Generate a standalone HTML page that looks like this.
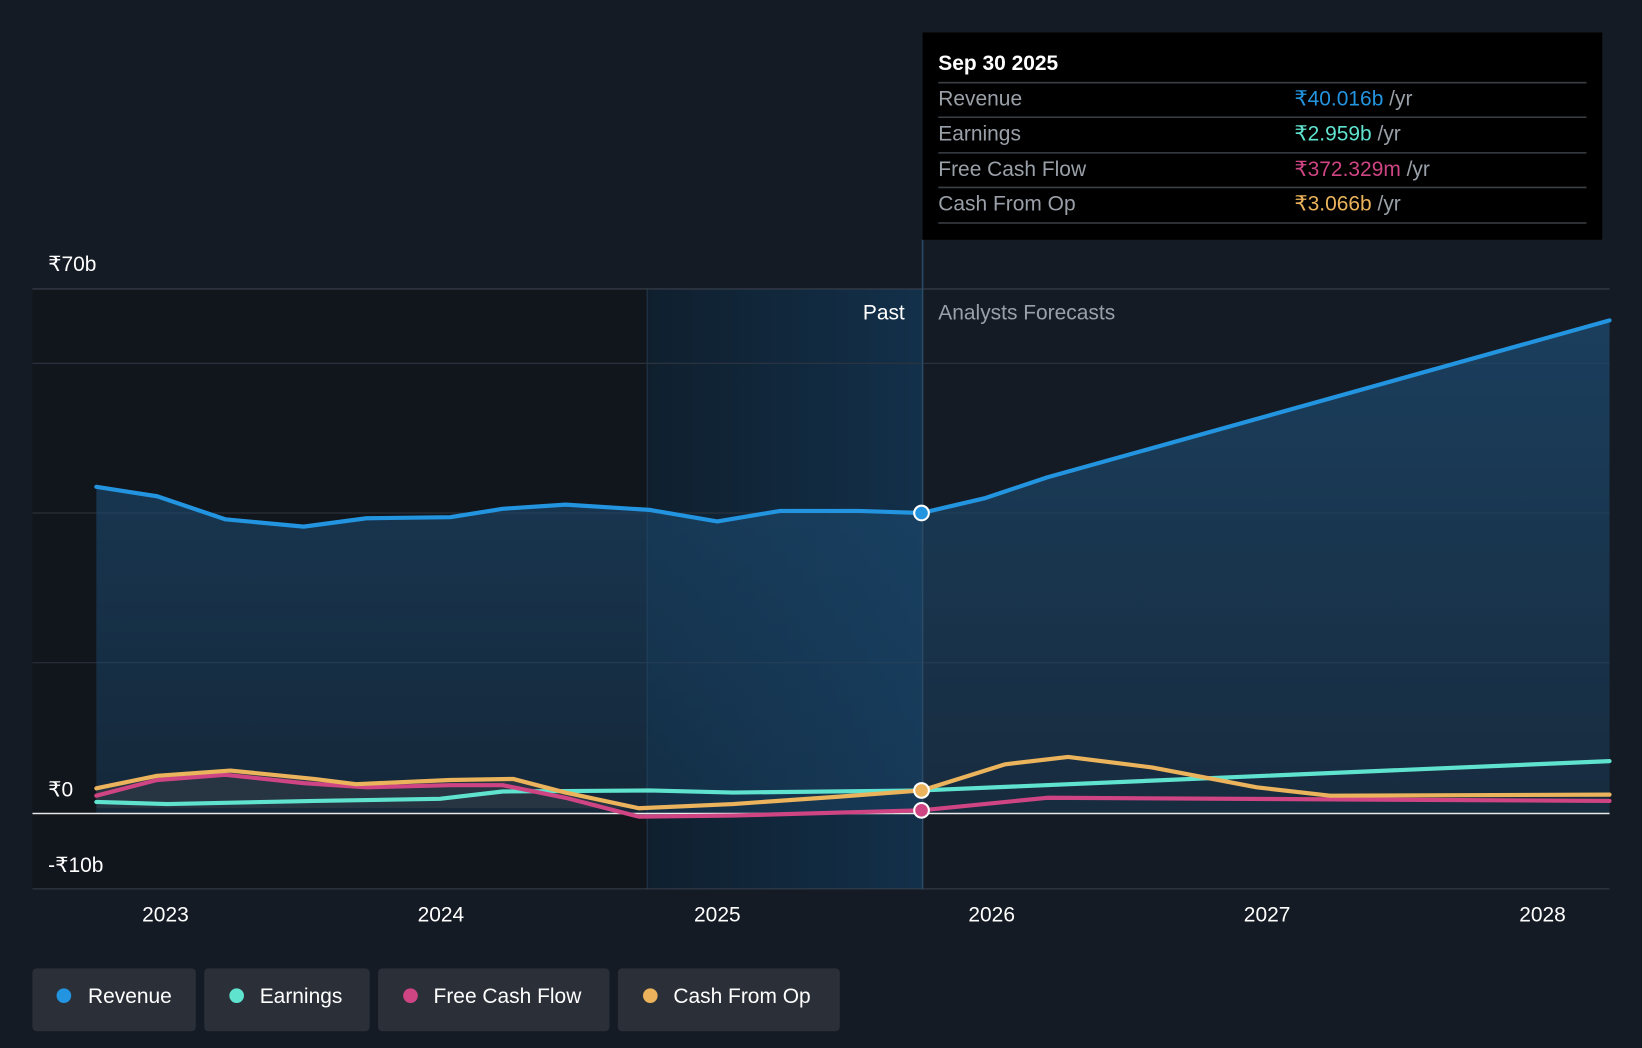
<!DOCTYPE html>
<html><head><meta charset="utf-8"><style>
html,body{margin:0;padding:0;background:#151b24;width:1642px;height:1048px;overflow:hidden}
svg{display:block}
text{font-family:"Liberation Sans",sans-serif}
</style></head><body>
<svg width="1642" height="1048" viewBox="0 0 1568 1001" preserveAspectRatio="none">
<defs>
<linearGradient id="hl" x1="0" x2="1" y1="0" y2="0">
<stop offset="0" stop-color="#0f1f2e"/><stop offset="1" stop-color="#13304a"/></linearGradient>
<linearGradient id="rf" x1="0" x2="0" y1="0" y2="1">
<stop offset="0" stop-color="#1c4a70" stop-opacity="0.75"/><stop offset="1" stop-color="#1c4a70" stop-opacity="0.35"/></linearGradient>
</defs>
<rect width="1568" height="1001" fill="#151b24"/>
<rect x="31" y="276" width="587" height="573" fill="#11151c"/>
<rect x="618" y="276" width="263" height="573" fill="url(#hl)"/>
<line x1="618" y1="276" x2="618" y2="849" stroke="#23384a" stroke-width="1"/>
<g stroke="#2e3540" stroke-width="1">
<line x1="31" y1="276" x2="1537" y2="276" stroke="#3a414c"/>
<line x1="31" y1="347" x2="1537" y2="347"/>
<line x1="31" y1="490" x2="1537" y2="490"/>
<line x1="31" y1="633" x2="1537" y2="633"/>
<line x1="31" y1="849" x2="1537" y2="849" stroke="#3a414c"/>
</g>
<polygon fill="url(#rf)" points="92,465 150,474 215,496 290,503 350,495 430,494 480,486 540,482 620,487 685,498 745,488 820,488 880,490 940,476 1000,456 1537,306 1537,777 92,777"/>
<polygon fill="#3a4048" opacity="0.5" points="92,753 150,741 220,736 300,744 340,749 430,745 490,744 540,757 610,772 92,772"/>
<line x1="31" y1="777" x2="1537" y2="777" stroke="#e8e8e8" stroke-width="1.5"/>
<line x1="881" y1="229" x2="881" y2="849" stroke="#2a4a66" stroke-width="1.5"/>
<g fill="none" stroke-width="4" stroke-linejoin="round" stroke-linecap="round">
<polyline stroke="#2394df" points="92,465 150,474 215,496 290,503 350,495 430,494 480,486 540,482 620,487 685,498 745,488 820,488 880,490 940,476 1000,456 1537,306"/>
<polyline stroke="#5fe3cf" points="92,766 160,768 300,765 420,763 480,756 620,755 700,757 880,755 1537,727"/>
<polyline stroke="#cf4584" points="92,760 150,745 215,740 290,748 350,752 430,750 480,750 540,762 610,780 700,779 880,774 1000,762 1537,765"/>
<polyline stroke="#eab35c" points="92,753 150,741 220,736 300,744 340,749 430,745 490,744 540,757 610,772 700,768 800,761 880,755 960,730 1020,723 1100,733 1200,752 1270,760 1537,759"/>
</g>
<circle cx="880" cy="490" r="7" fill="#2394df" stroke="#fff" stroke-width="2"/>
<circle cx="880" cy="755" r="7" fill="#eab35c" stroke="#fff" stroke-width="2"/>
<circle cx="880" cy="774" r="7" fill="#cf4584" stroke="#fff" stroke-width="2"/>
<g font-size="20" fill="#ffffff">
<text x="46" y="259">₹70b</text>
<text x="46" y="761">₹0</text>
<text x="46" y="833">-₹10b</text>
<text x="864" y="305" text-anchor="end">Past</text>
<text x="896" y="305" fill="#9aa0a8">Analysts Forecasts</text>
</g>
<g font-size="20" fill="#ffffff" text-anchor="middle">
<text x="158" y="880">2023</text><text x="421" y="880">2024</text><text x="685" y="880">2025</text>
<text x="947" y="880">2026</text><text x="1210" y="880">2027</text><text x="1473" y="880">2028</text>
</g>
<rect x="881" y="31" width="649" height="198" fill="#000"/>
<g font-size="20">
<text x="896" y="67" fill="#fff" font-weight="bold">Sep 30 2025</text>
<g stroke="#3a3f46" stroke-width="1.5"><line x1="896" y1="79" x2="1515" y2="79"/><line x1="896" y1="112" x2="1515" y2="112"/><line x1="896" y1="146" x2="1515" y2="146"/><line x1="896" y1="179" x2="1515" y2="179"/><line x1="896" y1="213" x2="1515" y2="213"/></g>
<text x="896" y="101" fill="#9aa0a8">Revenue</text>
<text x="896" y="134" fill="#9aa0a8">Earnings</text>
<text x="896" y="168" fill="#9aa0a8">Free Cash Flow</text>
<text x="896" y="201" fill="#9aa0a8">Cash From Op</text>
<text x="1236" y="101"><tspan fill="#2394df">₹40.016b</tspan><tspan fill="#9aa0a8"> /yr</tspan></text>
<text x="1236" y="134"><tspan fill="#5fe3cf">₹2.959b</tspan><tspan fill="#9aa0a8"> /yr</tspan></text>
<text x="1236" y="168"><tspan fill="#cf4584">₹372.329m</tspan><tspan fill="#9aa0a8"> /yr</tspan></text>
<text x="1236" y="201"><tspan fill="#eab35c">₹3.066b</tspan><tspan fill="#9aa0a8"> /yr</tspan></text>
</g>
<g font-size="20" fill="#fff">
<rect x="31" y="925" width="156" height="60" rx="4" fill="#2a2f38"/>
<circle cx="61" cy="951" r="7" fill="#2394df"/><text x="84" y="958">Revenue</text>
<rect x="195" y="925" width="158" height="60" rx="4" fill="#2a2f38"/>
<circle cx="226" cy="951" r="7" fill="#5fe3cf"/><text x="248" y="958">Earnings</text>
<rect x="361" y="925" width="221" height="60" rx="4" fill="#2a2f38"/>
<circle cx="392" cy="951" r="7" fill="#cf4584"/><text x="414" y="958">Free Cash Flow</text>
<rect x="590" y="925" width="212" height="60" rx="4" fill="#2a2f38"/>
<circle cx="621" cy="951" r="7" fill="#eab35c"/><text x="643" y="958">Cash From Op</text>
</g>
</svg>
</body></html>
